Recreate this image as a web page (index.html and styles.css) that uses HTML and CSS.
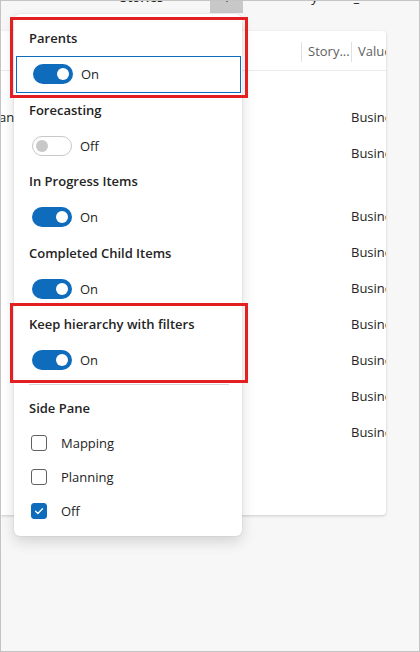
FILE: index.html
```html
<!DOCTYPE html>
<html lang="en">
<head>
    <meta charset="UTF-8">
    <meta name="viewport" content="width=device-width, initial-scale=1.0">
    <title>Roadmap view settings</title>
    <link rel="stylesheet" href="styles.css">
</head>
<body>
    <div class="topbar">
        <span class="top-text stories">Stories</span>
        <span class="top-btn"><span class="top-btn-dot"></span></span>
        <span class="top-text top-a">y</span>
        <span class="top-text top-b">_</span>
    </div>

    <div class="board">
        <div class="board-head">
            <div class="col col-story">Story...</div>
            <div class="col col-value">Value</div>
        </div>
        <div class="board-body">
            <div class="row"><span class="lead">an</span><span class="tick"></span><span class="value">Business</span></div>
            <div class="row"><span class="lead"></span><span class="tick"></span><span class="value">Business</span></div>
            <div class="row-gap"></div>
            <div class="row"><span class="lead"></span><span class="tick"></span><span class="value">Business</span></div>
            <div class="row"><span class="lead"></span><span class="tick"></span><span class="value">Business</span></div>
            <div class="row"><span class="lead"></span><span class="tick"></span><span class="value">Business</span></div>
            <div class="row"><span class="lead"></span><span class="tick"></span><span class="value">Business</span></div>
            <div class="row"><span class="lead"></span><span class="tick"></span><span class="value">Business</span></div>
            <div class="row"><span class="lead"></span><span class="tick"></span><span class="value">Business</span></div>
            <div class="row"><span class="lead"></span><span class="tick"></span><span class="value">Business</span></div>
        </div>
    </div>

    <!-- view settings menu -->
    <div class="menu">
        <p class="menu-label">Parents</p>
        <div class="switch-row focused">
            <span class="switch on"></span><span class="switch-text">On</span>
        </div>

        <p class="menu-label">Forecasting</p>
        <div class="switch-row">
            <span class="switch off"></span><span class="switch-text">Off</span>
        </div>

        <p class="menu-label">In Progress Items</p>
        <div class="switch-row">
            <span class="switch on"></span><span class="switch-text">On</span>
        </div>

        <p class="menu-label">Completed Child Items</p>
        <div class="switch-row">
            <span class="switch on"></span><span class="switch-text">On</span>
        </div>

        <p class="menu-label">Keep hierarchy with filters</p>
        <div class="switch-row">
            <span class="switch on"></span><span class="switch-text">On</span>
        </div>

        <div class="divider"></div>

        <p class="menu-label">Side Pane</p>
        <div class="check-row">
            <span class="checkbox"></span><span class="check-text">Mapping</span>
        </div>
        <div class="check-row">
            <span class="checkbox"></span><span class="check-text">Planning</span>
        </div>
        <div class="check-row">
            <span class="checkbox checked">
                <svg width="12" height="12" viewBox="0 0 12 12"><path d="M2.6 6.2l2.3 2.3 4.6-4.8" fill="none" stroke="#fff" stroke-width="1.3" stroke-linecap="round" stroke-linejoin="round"/></svg>
            </span><span class="check-text">Off</span>
        </div>
    </div>

    <!-- callouts -->
    <div class="callout callout-parents"></div>
    <div class="callout callout-hierarchy"></div>
</body>
</html>
```

FILE: styles.css
```css
* {
    margin: 0;
    padding: 0;
    box-sizing: border-box;
}

body {
    font-family: 'Open Sans', 'Liberation Sans', sans-serif;
    font-size: 13px;
    color: #242424;
    width: 420px;
    height: 652px;
    border: 1px solid #c4c4c4;
    background: #f7f7f7;
    position: relative;
    overflow: hidden;
}

/* strip above the board, mostly scrolled away */
.topbar {
    height: 30px;
    display: flex;
    align-items: flex-start;
    overflow: hidden;
}
.top-text {
    line-height: 14px;
    margin-top: -11px;
    color: #242424;
}
.stories {
    margin-left: 119px;
    font-weight: 600;
}
.top-btn {
    width: 33px;
    height: 12px;
    margin-left: 47px;
    background: #c8c8c8;
    display: flex;
    justify-content: center;
}
.top-btn-dot {
    width: 2px;
    height: 1px;
    background: #707070;
}
.top-a {
    margin-left: 68px;
}
.top-b {
    margin-left: 36px;
    font-weight: 700;
}

.board {
    width: 385px;
    height: 484px;
    background: #fff;
    border-radius: 0 4px 4px 0;
    box-shadow: 0 1px 3px rgba(0, 0, 0, 0.18);
    overflow: hidden;
}
.board-head {
    height: 40px;
    border-bottom: 1px solid #ebebeb;
    display: flex;
    align-items: center;
    padding-left: 300px;
    padding-top: 2px;
    color: #616161;
}
.col {
    height: 20px;
    line-height: 19px;
    border-left: 1px solid #e0e0e0;
    padding-left: 6px;
    white-space: nowrap;
    flex-shrink: 0;
}
.col-story {
    width: 50px;
}
.col-value {
    width: 40px;
}
.board-body {
    padding-top: 28px;
}
.row {
    height: 36px;
    display: flex;
    align-items: center;
}
.row > span {
    flex-shrink: 0;
}
.row-gap {
    height: 27px;
}
.lead {
    width: 239px;
    margin-left: -2px;
}
.tick {
    width: 1px;
    height: 3px;
    background: #2a7fd0;
}
.value {
    margin-left: 112px;
    white-space: nowrap;
}

.menu {
    position: absolute;
    left: 13px;
    top: 13px;
    width: 228px;
    height: 522px;
    background: #fff;
    border-radius: 6px;
    box-shadow: 0 0 2px rgba(0, 0, 0, 0.12), 0 6px 14px rgba(0, 0, 0, 0.14);
    padding-top: 7px;
    display: flex;
    flex-direction: column;
}
.menu-label {
    height: 35px;
    line-height: 35px;
    padding-left: 15px;
    font-weight: 600;
}
.switch-row {
    height: 36.5px;
    display: flex;
    align-items: center;
    padding-left: 18px;
    gap: 8px;
}
.switch-row.focused {
    margin: 0 1px 0 2px;
    border: 1px solid #0f6cbd;
    padding-left: 16px;
}
.switch {
    width: 40px;
    height: 20px;
    border-radius: 10px;
    position: relative;
}
.switch::after {
    content: '';
    position: absolute;
    top: 4px;
    width: 12px;
    height: 12px;
    border-radius: 50%;
}
.switch.on {
    background: #0f6cbd;
}
.switch.on::after {
    right: 4px;
    background: #fff;
}
.switch.off {
    border: 1px solid #c8c8c8;
    background: #fff;
}
.switch.off::after {
    top: 3px;
    left: 3px;
    background: #c8c8c8;
}

.divider {
    height: 1px;
    background: #d6d6d6;
    margin: 5px 13px 0 15px;
}
.menu .divider + .menu-label {
    margin-top: 6px;
}
.check-row {
    height: 34px;
    display: flex;
    align-items: center;
    padding-left: 17px;
    gap: 14px;
}
.checkbox {
    width: 16px;
    height: 16px;
    border: 1px solid #616161;
    border-radius: 3px;
    display: flex;
    align-items: center;
    justify-content: center;
}
.checkbox.checked {
    background: #0f6cbd;
    border-color: #0f6cbd;
}

.callout {
    position: absolute;
    border: 3px solid #e41f22;
}
.callout-parents {
    left: 9px;
    top: 16px;
    width: 238px;
    height: 81px;
}
.callout-hierarchy {
    left: 9px;
    top: 302px;
    width: 238px;
    height: 80px;
}
```
